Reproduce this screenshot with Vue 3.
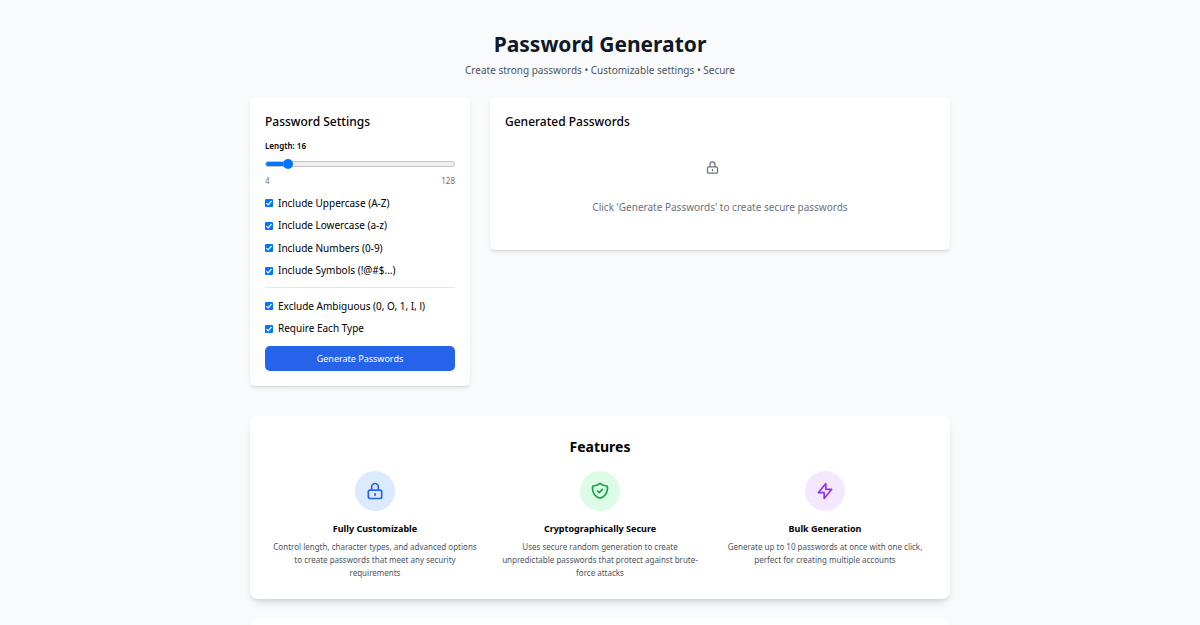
<template>
  <main class="page">
    <header class="page-header">
      <h1>Password Generator</h1>
      <p>Create strong passwords • Customizable settings • Secure</p>
    </header>

    <div class="generator">
      <form class="card" @submit.prevent="generatePasswords">
        <h2>Password Settings</h2>
        <label class="length-label" for="length">Length: {{ length }}</label>
        <input
          id="length"
          v-model.number="length"
          class="length-range"
          type="range"
          :min="MIN_LENGTH"
          :max="MAX_LENGTH"
          :style="{ '--fill': lengthPercent + '%' }"
        />
        <div class="range-limits">
          <span>{{ MIN_LENGTH }}</span>
          <span>{{ MAX_LENGTH }}</span>
        </div>

        <div class="options">
          <label v-for="item in charsets" :key="item.key" class="option">
            <input v-model="settings[item.key]" type="checkbox" />
            {{ item.label }}
          </label>
        </div>
        <div class="options options-extra">
          <label v-for="item in rules" :key="item.key" class="option">
            <input v-model="settings[item.key]" type="checkbox" />
            {{ item.label }}
          </label>
        </div>

        <button class="generate-button" type="submit">Generate Passwords</button>
      </form>

      <section class="card">
        <h2>Generated Passwords</h2>
        <ul v-if="passwords.length" class="password-list">
          <li v-for="password in passwords" :key="password">{{ password }}</li>
        </ul>
        <div v-else class="empty-state">
          <svg class="empty-icon" viewBox="0 0 24 24">
            <path :d="icons.lock" />
          </svg>
          <p>Click 'Generate Passwords' to create secure passwords</p>
        </div>
      </section>
    </div>

    <section class="card card-large">
      <h2>Features</h2>
      <div class="features">
        <article v-for="feature in features" :key="feature.title" class="feature">
          <div class="feature-icon" :class="feature.color">
            <svg viewBox="0 0 24 24">
              <path :d="icons[feature.icon]" />
            </svg>
          </div>
          <h3>{{ feature.title }}</h3>
          <p>{{ feature.text }}</p>
        </article>
      </div>
    </section>

    <section class="card card-large"></section>
  </main>
</template>

<script setup>
// imports
import { ref, reactive, computed } from "vue";
// constants
const MIN_LENGTH = 4;
const MAX_LENGTH = 128;
const charsets = [
  { key: "uppercase", label: "Include Uppercase (A-Z)", chars: "ABCDEFGHIJKLMNOPQRSTUVWXYZ" },
  { key: "lowercase", label: "Include Lowercase (a-z)", chars: "abcdefghijklmnopqrstuvwxyz" },
  { key: "numbers", label: "Include Numbers (0-9)", chars: "0123456789" },
  { key: "symbols", label: "Include Symbols (!@#$...)", chars: "!@#$%^&*-_=+?" },
];
const rules = [
  { key: "excludeAmbiguous", label: "Exclude Ambiguous (0, O, 1, I, l)" },
  { key: "requireEach", label: "Require Each Type" },
];
const icons = {
  lock: "M12 15v2m-6 4h12a2 2 0 002-2v-6a2 2 0 00-2-2H6a2 2 0 00-2 2v6a2 2 0 002 2zm10-10V7a4 4 0 00-8 0v4h8z",
  shield:
    "M9 12l2 2 4-4m5.618-4.016A11.955 11.955 0 0112 2.944a11.955 11.955 0 01-8.618 3.04A12.02 12.02 0 003 9c0 5.591 3.824 10.29 9 11.622 5.176-1.332 9-6.03 9-11.622 0-1.042-.133-2.052-.382-3.016z",
  bolt: "M13 10V3L4 14h7v7l9-11h-7z",
};
const features = [
  {
    icon: "lock",
    color: "blue",
    title: "Fully Customizable",
    text: "Control length, character types, and advanced options to create passwords that meet any security requirements",
  },
  {
    icon: "shield",
    color: "green",
    title: "Cryptographically Secure",
    text: "Uses secure random generation to create unpredictable passwords that protect against brute-force attacks",
  },
  {
    icon: "bolt",
    color: "purple",
    title: "Bulk Generation",
    text: "Generate up to 10 passwords at once with one click, perfect for creating multiple accounts",
  },
];
// ref
const length = ref(16);
const passwords = ref([]);
const settings = reactive({
  uppercase: true,
  lowercase: true,
  numbers: true,
  symbols: true,
  excludeAmbiguous: true,
  requireEach: true,
});
// computed
const lengthPercent = computed(
  () => ((length.value - MIN_LENGTH) / (MAX_LENGTH - MIN_LENGTH)) * 100
);
// methods
const randomIndex = (max) => crypto.getRandomValues(new Uint32Array(1))[0] % max;

const createPassword = (sets) => {
  const all = sets.join("");
  const chars = settings.requireEach ? sets.map((set) => set[randomIndex(set.length)]) : [];
  while (chars.length < length.value) {
    chars.splice(randomIndex(chars.length + 1), 0, all[randomIndex(all.length)]);
  }
  return chars.join("");
};

const generatePasswords = () => {
  const sets = charsets
    .filter((item) => settings[item.key])
    .map((item) => (settings.excludeAmbiguous ? item.chars.replace(/[0O1Il]/g, "") : item.chars));
  passwords.value = sets.length ? Array.from({ length: 5 }, () => createPassword(sets)) : [];
};
</script>

<style>
body {
  margin: 0;
  background-color: #f9fafb;
}
</style>

<style scoped>
.page {
  max-width: 700px;
  margin: 0 auto;
  padding: 31px 10px 0;
  font-family: "Segoe UI", "Noto Sans", "Open Sans", sans-serif;
  font-size: 10px;
  line-height: 15px;
  color: #000;
}

h1,
h2,
h3,
p {
  margin: 0;
}

.page-header {
  margin-bottom: 19px;
  text-align: center;
}

.page-header h1 {
  margin-bottom: 5px;
  font-size: 21px;
  line-height: 27px;
  font-weight: 700;
  color: #111827;
}

.page-header p {
  color: #4b5563;
}

.generator {
  display: grid;
  grid-template-columns: 220px 1fr;
  gap: 20px;
  align-items: start;
  margin-bottom: 30px;
}

.card {
  padding: 15px;
  border-radius: 5px;
  background-color: #fff;
  box-shadow: 0 3px 4px -1px rgba(0, 0, 0, 0.1), 0 1px 3px -1px rgba(0, 0, 0, 0.1);
}

.card h2 {
  margin-bottom: 8px;
  font-size: 12px;
  line-height: 20px;
  font-weight: 500;
}

.length-label {
  display: block;
  margin-bottom: 7px;
  font-size: 8px;
  line-height: 12px;
  font-weight: 600;
}

.length-range {
  display: block;
  width: 100%;
  height: 10px;
  margin: 0 0 6px;
  appearance: none;
  background: none;
}

.length-range::-webkit-slider-runnable-track {
  height: 6px;
  box-sizing: border-box;
  border: 1px solid #c4c4c4;
  border-radius: 3px;
  background: linear-gradient(#0075ff, #0075ff) 0 0 / var(--fill) 100% no-repeat border-box #efefef;
}

.length-range::-webkit-slider-thumb {
  width: 10px;
  height: 10px;
  margin-top: -3px;
  appearance: none;
  border-radius: 50%;
  background-color: #0075ff;
}

.range-limits {
  display: flex;
  justify-content: space-between;
  margin-bottom: 5px;
  font-size: 8px;
  line-height: 12px;
  color: #6b7280;
}

.options {
  display: grid;
  grid-template-rows: repeat(4, 1fr);
  height: 90px;
}

.options-extra {
  grid-template-rows: repeat(2, 1fr);
  height: 45px;
  margin: 5px 0 6px;
  padding-top: 7px;
  border-top: 1px solid #e5e7eb;
}

.option {
  display: flex;
  align-items: center;
  gap: 5px;
}

.option input {
  box-sizing: border-box;
  width: 8px;
  height: 8px;
  margin: 0;
  appearance: none;
  border: 1px solid #767676;
  border-radius: 1px;
  background-color: #fff;
}

.option input:checked {
  border: none;
  background: #0075ff
    url("data:image/svg+xml,%3Csvg xmlns='http://www.w3.org/2000/svg' viewBox='0 0 8 8'%3E%3Cpath d='M1.5 4.2 3.2 5.9 6.5 2' fill='none' stroke='white' stroke-width='1.2'/%3E%3C/svg%3E")
    center / 100%;
}

.generate-button {
  display: block;
  width: 100%;
  padding: 5px 10px;
  border: none;
  border-radius: 5px;
  background-color: #2563eb;
  color: #fff;
  font: inherit;
  font-size: 9px;
  cursor: pointer;
}

.generate-button:hover {
  background-color: #1d4ed8;
}

.password-list {
  margin: 0;
  padding: 0;
  list-style: none;
  overflow-wrap: anywhere;
}

.empty-state {
  padding: 20px 0;
  text-align: center;
  color: #6b7280;
}

svg {
  display: block;
  fill: none;
  stroke: currentColor;
  stroke-width: 2;
  stroke-linecap: round;
  stroke-linejoin: round;
}

.empty-icon {
  width: 15px;
  height: 15px;
  margin: 0 auto 25px;
  padding-right: 15px;
}

.card-large {
  margin-bottom: 20px;
  padding: 20px;
  border-radius: 8px;
  box-shadow: 0 6px 9px -2px rgba(0, 0, 0, 0.1), 0 3px 4px -2px rgba(0, 0, 0, 0.1);
}

.card-large h2 {
  margin-bottom: 13px;
  font-size: 14px;
  line-height: 22px;
  font-weight: 700;
  text-align: center;
}

.features {
  display: grid;
  grid-template-columns: repeat(3, 1fr);
  gap: 15px;
}

.feature {
  text-align: center;
}

.feature-icon {
  display: flex;
  align-items: center;
  justify-content: center;
  width: 40px;
  height: 40px;
  margin: 0 auto 10px;
  border-radius: 50%;
}

.feature-icon svg {
  width: 20px;
  height: 20px;
}

.blue {
  background-color: #dbeafe;
  color: #2563eb;
}

.green {
  background-color: #dcfce7;
  color: #16a34a;
}

.purple {
  background-color: #f3e8ff;
  color: #9333ea;
}

.feature h3 {
  margin-bottom: 4px;
  font-size: 9px;
  line-height: 15px;
  font-weight: 700;
}

.feature p {
  padding: 0 2px;
  font-size: 8px;
  line-height: 13px;
  color: #4b5563;
}

@media (max-width: 640px) {
  .generator,
  .features {
    grid-template-columns: 1fr;
  }
}
</style>
